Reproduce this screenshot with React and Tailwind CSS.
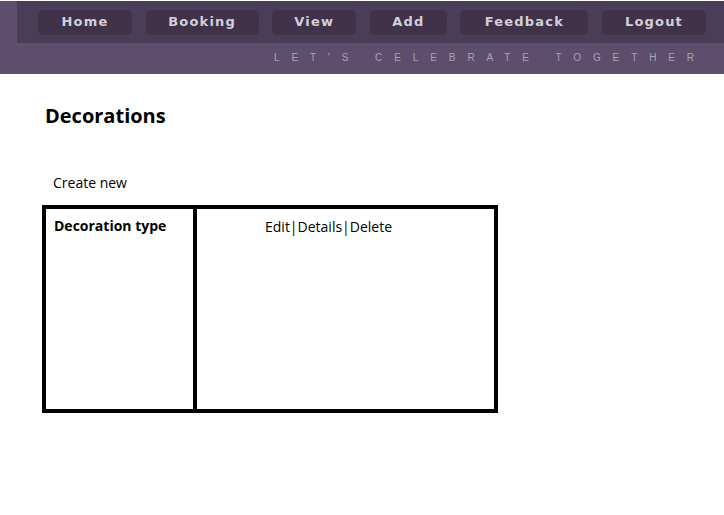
const navItems = [
  { label: 'Home', w: 'w-[94px]' },
  { label: 'Booking', w: 'w-[113px]' },
  { label: 'View', w: 'w-[84px]' },
  { label: 'Add', w: 'w-[77px]' },
  { label: 'Feedback', w: 'w-[128px]' },
  { label: 'Logout', w: 'w-[104px]' },
];

const Header = () => (
  <div className="mt-px h-[73px] bg-[#5c4e6c] flex flex-col">
    <div className="ml-[17px] h-[42px] bg-[#4a3d58] flex items-center pl-[21px] gap-[13.6px]">
      {navItems.map((item) => (
        <div
          key={item.label}
          className={`${item.w} h-[25px] rounded-[5px] bg-[#3f3249] flex items-center justify-center text-[13px] font-bold tracking-[1.2px] text-[#d3cfda] font-['DejaVu_Sans',sans-serif]`}
        >
          {item.label}
        </div>
      ))}
    </div>
    <div className="flex-1 flex items-center pl-[274px] pb-[2px] text-[10px] tracking-[11.9px] text-[#aca0b9] font-['Liberation_Sans',sans-serif]">
      LET'S CELEBRATE TOGETHER
    </div>
  </div>
);

export default function App() {
  return (
    <div className="min-h-screen bg-white font-['Open_Sans',sans-serif] text-black">
      <Header />
      <div className="pl-[45px] pt-[28px]">
        <h2 className="text-[20px] font-bold leading-[28px]">Decorations</h2>
        <div className="pl-[8px] pt-[43px] text-[14px] leading-[20px]">Create new</div>
        <div className="mt-[12px] -ml-[3px] w-[456px] h-[208px] border-[4px] border-black flex">
          <div className="w-[151px] border-r-[4px] border-black pl-[8px] pt-[7px] text-[14px] font-bold leading-[20px]">
            Decoration type
          </div>
          <div className="flex-1 pl-[68px] pt-[8px] text-[14px] leading-[20px]">
            Edit|Details|Delete
          </div>
        </div>
      </div>
    </div>
  );
}
